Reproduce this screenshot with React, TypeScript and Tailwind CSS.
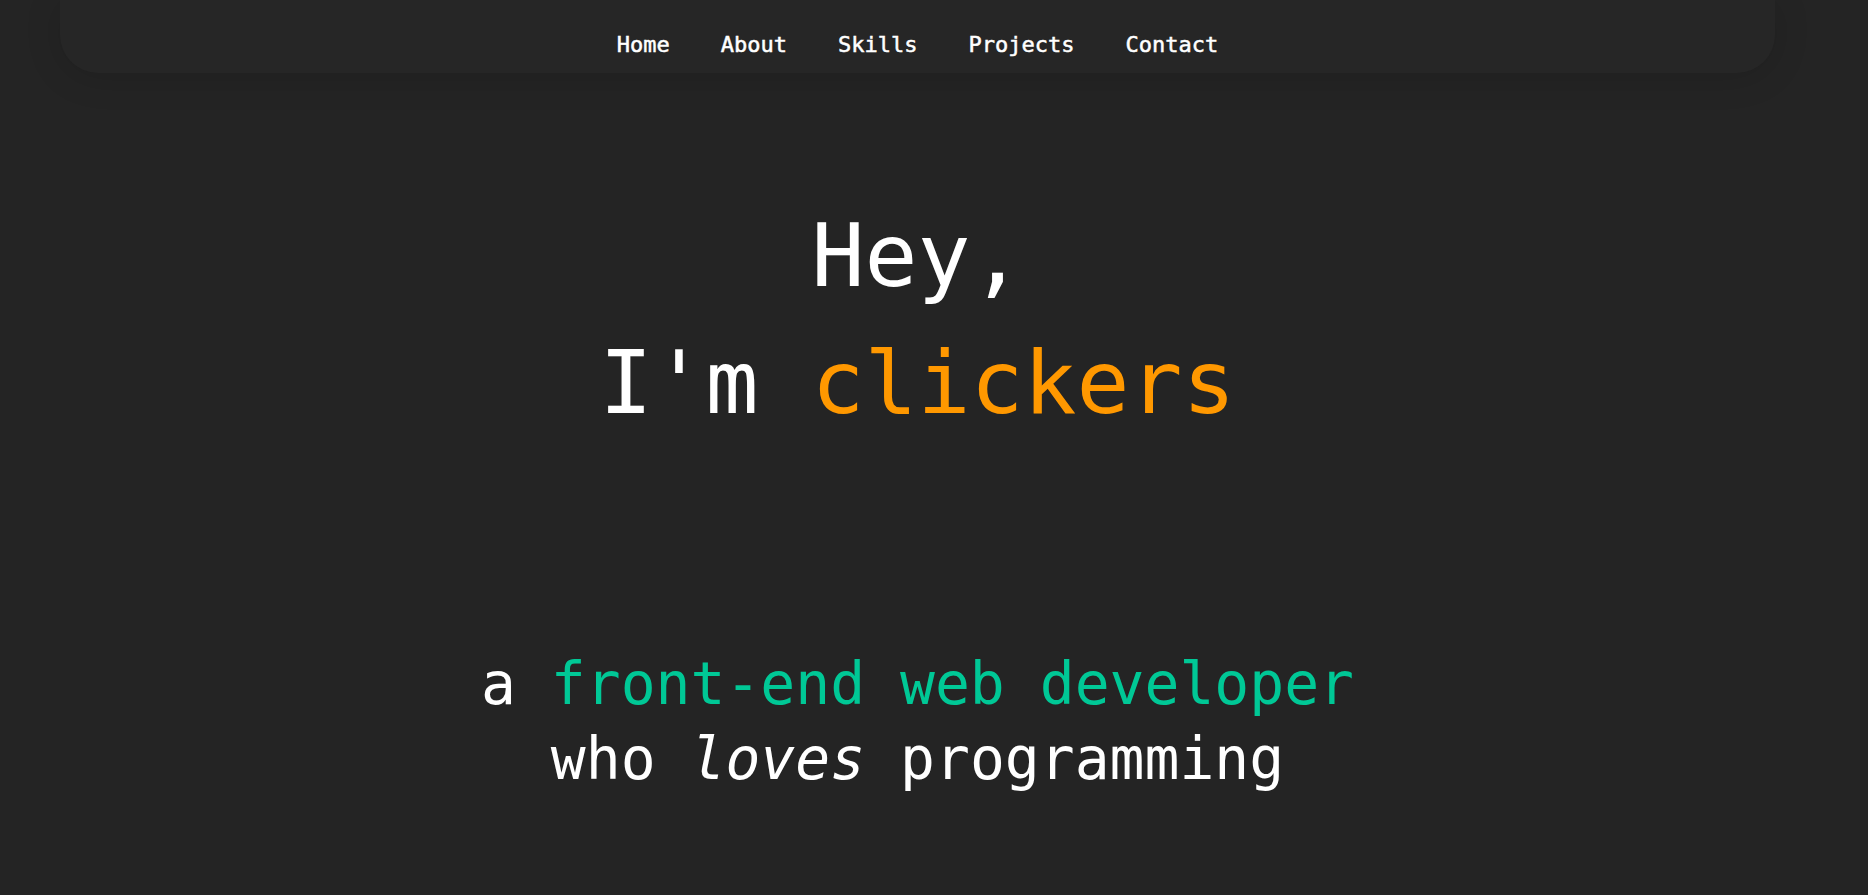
import React from "react";

const links = ["Home", "About", "Skills", "Projects", "Contact"];

export default function App() {
  return (
    <div
      className="min-h-screen w-full bg-[#242424] text-white overflow-hidden"
      style={{ fontFamily: '"DejaVu Sans Mono", "Liberation Mono", monospace' }}
    >
      <div className="w-[1835px] flex flex-col">
        <nav className="mx-[60px] h-[73px] rounded-b-[38px] bg-[#262626] shadow-[0_4px_36px_rgba(0,0,0,0.14)] flex justify-center pt-[31px]">
          <ul className="flex gap-[51px] text-[22px] leading-[28px] font-normal [-webkit-text-stroke:0.5px_#ffffff]">
            {links.map((l) => (
              <li key={l}>
                <a href="#" className="text-white">
                  {l}
                </a>
              </li>
            ))}
          </ul>
        </nav>

        <section className="flex flex-col items-center mt-[119px]">
          <h1 className="text-[88px] leading-[127px] font-normal text-center">
            <span className="block">Hey,</span>
            <span className="block">
              I'm <span className="text-[#ff9800]">clickers</span>
            </span>
          </h1>
          <p className="mt-[201px] text-[58px] leading-[75px] text-center">
            <span className="block">
              a <span className="text-[#00c896]">front-end web developer</span>
            </span>
            <span className="block">
              who <em className="italic">loves</em> programming
            </span>
          </p>
        </section>
      </div>
    </div>
  );
}
